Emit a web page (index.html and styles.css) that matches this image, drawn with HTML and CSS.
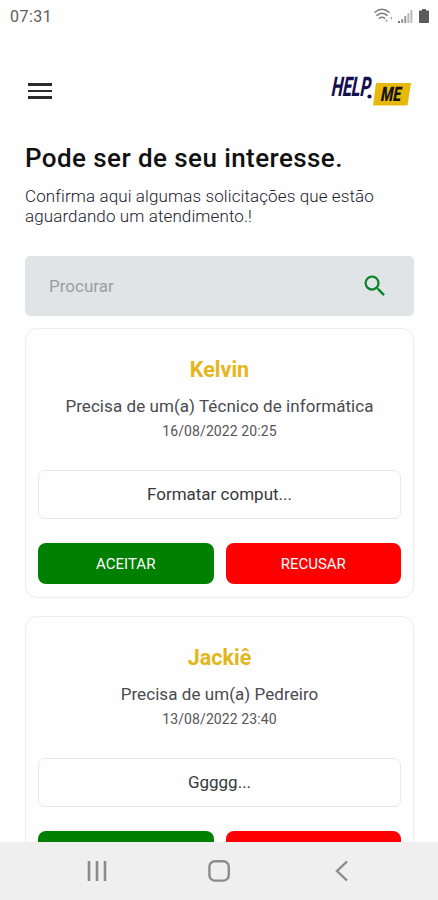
FILE: index.html
```html
<!DOCTYPE html>
<html lang="pt-BR">
<head>
  <meta charset="UTF-8">
  <meta name="viewport" content="width=device-width, initial-scale=1">
  <title>Help.me</title>
  <link rel="stylesheet" href="styles.css">
</head>
<body>

  <div class="status-bar">
    <span class="clock">07:31</span>
    <div class="status-icons">
      <svg width="20" height="16" viewBox="0 0 20 16" fill="none" stroke="#7c7c7c" stroke-width="1.5" stroke-linecap="round">
        <path d="M1 4.2Q8 -1.8 15 4.2" />
        <path d="M3 7.4Q8 3.2 13 7.4" />
        <path d="M5.4 10.2Q8 8.2 10.6 10.2" />
        <path d="M12.6 12v1.2M17.4 9.5v1.2" stroke="#aaa" />
      </svg>
      <svg width="15" height="15" viewBox="0 0 15 15">
        <path d="M0 12h2v2H0z" fill="#777" />
        <path d="M3.2 10h2v4h-2zM6.3 7h2v7h-2z" fill="#999" />
        <path d="M9.4 4h2v10h-2zM12.4 1h2v13h-2z" fill="#bbb" />
      </svg>
      <svg class="battery" width="10" height="15" viewBox="0 0 10 15">
        <path d="M3 0h4v1.5h2.2q.8 0 .8.8V13q0 1-1 1H1q-1 0-1-1V2.3q0-.8.8-.8H3z" fill="#5b5b5b" />
      </svg>
    </div>
  </div>

  <header class="header">
    <button class="menu-btn" aria-label="Menu">
      <span></span>
      <span></span>
      <span></span>
    </button>
    <svg class="logo" width="84" height="36" viewBox="0 0 84 36">
      <path d="M49 10h35l-3.5 22.5H46z" fill="#e7b90d" />
      <g transform="translate(3.5 22.5) skewX(-11)">
        <text class="logo-help" textLength="39" lengthAdjust="spacingAndGlyphs">HELP</text>
      </g>
      <circle cx="42.5" cy="23.5" r="2.1" fill="#14104f" />
      <g transform="translate(53 28) skewX(-11)">
        <text class="logo-me" textLength="20" lengthAdjust="spacingAndGlyphs">ME</text>
      </g>
    </svg>
  </header>

  <main class="content">
    <h1 class="title">Pode ser de seu interesse.</h1>
    <p class="subtitle">Confirma aqui algumas solicitações que estão<br>aguardando um atendimento.!</p>

    <div class="search">
      <span class="search-text">Procurar</span>
      <svg width="28" height="28" viewBox="0 0 24 24" fill="#0b8528">
        <path d="M15.5 14h-.79l-.28-.27A6.47 6.47 0 0 0 16 9.5 6.5 6.5 0 1 0 9.5 16c1.61 0 3.09-.59 4.23-1.57l.27.28v.79l5 4.99L20.49 19l-4.99-5zm-6 0C7.01 14 5 11.99 5 9.5S7.01 5 9.5 5 14 7.01 14 9.5 11.99 14 9.5 14z" />
      </svg>
    </div>

    <div class="card">
      <h2 class="card-name">Kelvin</h2>
      <p class="card-need">Precisa de um(a) Técnico de informática</p>
      <p class="card-date">16/08/2022 20:25</p>
      <div class="card-desc">Formatar comput...</div>
      <div class="card-actions">
        <button class="btn accept">ACEITAR</button>
        <button class="btn refuse">RECUSAR</button>
      </div>
    </div>

    <div class="card">
      <h2 class="card-name">Jackiê</h2>
      <p class="card-need">Precisa de um(a) Pedreiro</p>
      <p class="card-date">13/08/2022 23:40</p>
      <div class="card-desc">Ggggg...</div>
      <div class="card-actions">
        <button class="btn accept"></button>
        <button class="btn refuse"></button>
      </div>
    </div>
  </main>

  <nav class="nav-bar">
    <svg width="24" height="24" viewBox="0 0 24 24" fill="none" stroke="#8b8b8b" stroke-width="2.6">
      <path d="M4 2v20M12 2v20M20 2v20" />
    </svg>
    <svg width="24" height="24" viewBox="0 0 24 24" fill="none" stroke="#8b8b8b" stroke-width="2.4">
      <rect x="2.4" y="2.2" width="19.4" height="19.4" rx="5.5" />
    </svg>
    <svg width="24" height="24" viewBox="0 0 24 24" fill="none" stroke="#8b8b8b" stroke-width="2.4">
      <path d="M18 2.5L8 12l10 9.5" />
    </svg>
  </nav>

</body>
</html>
```

FILE: styles.css
```css
* {
  box-sizing: border-box;
}

body {
  font-family: Roboto, sans-serif;
  background: #fefefe;
  margin: 0;
  height: 900px;
  display: flex;
  flex-direction: column;
  overflow: hidden;
}

h1, h2, p {
  margin: 0;
}

button {
  font-family: inherit;
  border: none;
  padding: 0;
}

.status-bar {
  display: flex;
  justify-content: space-between;
  align-items: center;
  height: 32px;
  flex: none;
  padding: 0 9px 0 10px;
}

.clock {
  font-size: 16px;
  letter-spacing: 0.5px;
  color: #5c5c5c;
}

.status-icons {
  display: flex;
  align-items: center;
  gap: 4px;
}

.battery {
  margin-left: 2px;
}

.header {
  display: flex;
  justify-content: space-between;
  align-items: center;
  height: 118px;
  flex: none;
  padding: 0 27px 0 28px;
}

.menu-btn {
  display: flex;
  flex-direction: column;
  gap: 4px;
  width: 24px;
  background: none;
}

.menu-btn span {
  height: 2.5px;
  background: #2b2b2b;
}

.logo {
  overflow: visible;
}

.logo-help {
  font-size: 27px;
  font-weight: 800;
  fill: #14104f;
}

.logo-me {
  font-size: 20px;
  font-weight: 900;
  fill: #17130a;
}

.content {
  flex: 1;
  min-height: 0;
  overflow: hidden;
  padding: 0 24px 0 25px;
  margin-top: -8px;
}

.title {
  font-size: 26px;
  line-height: 32px;
  font-weight: 500;
  letter-spacing: 0.42px;
  color: #111;
}

.subtitle {
  margin-top: 12px;
  font-size: 17px;
  line-height: 20px;
  font-weight: 300;
  letter-spacing: 0.11px;
  color: #22222c;
}

.search {
  display: flex;
  justify-content: space-between;
  align-items: center;
  height: 60px;
  margin-top: 30px;
  padding: 0 25px 0 24px;
  border-radius: 5px;
  background: #e0e4e7;
}

.search-text {
  font-size: 17px;
  color: #999ea1;
}

.card {
  height: 270px;
  margin-top: 12px;
  padding: 27px 12px 0;
  border: 1px solid #ececec;
  border-radius: 12px;
  text-align: center;
}

.card + .card {
  margin-top: 18px;
}

.card-name {
  font-size: 21.5px;
  line-height: 28px;
  font-weight: 700;
  color: #e3b71c;
}

.card-need {
  margin-top: 11px;
  font-size: 17px;
  line-height: 22px;
  letter-spacing: 0.06px;
  color: #4a4a50;
}

.card-date {
  margin-top: 4px;
  font-size: 14px;
  line-height: 20px;
  letter-spacing: 0.1px;
  color: #55555a;
}

.card-desc {
  height: 49px;
  margin-top: 29px;
  border: 1px solid #e9e9e9;
  border-radius: 7px;
  font-size: 17px;
  line-height: 47px;
  color: #38383c;
}

.card-actions {
  display: flex;
  gap: 12px;
  margin-top: 24px;
}

.btn {
  flex: 1;
  height: 41px;
  border-radius: 8px;
  font-size: 15px;
  color: #fff;
}

.accept {
  background: #008000;
}

.refuse {
  background: #f00;
}

.nav-bar {
  display: flex;
  justify-content: center;
  align-items: center;
  gap: 98px;
  height: 58px;
  flex: none;
  background: #efefef;
}
```
